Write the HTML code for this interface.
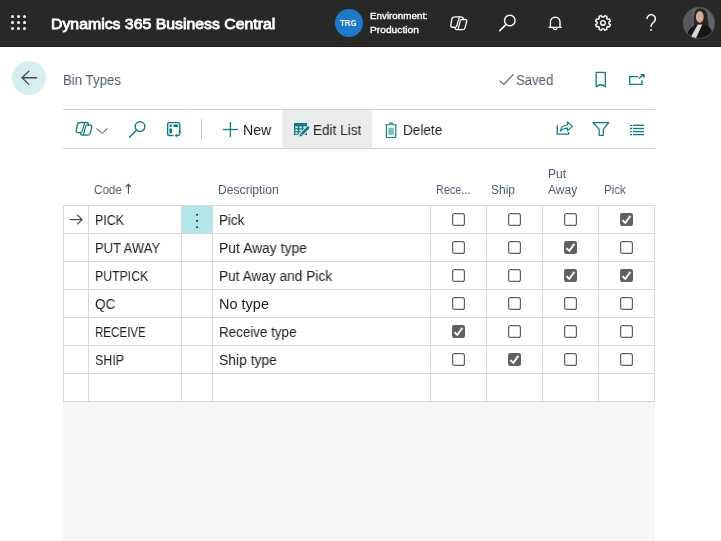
<!DOCTYPE html>
<html><head><meta charset="utf-8">
<style>
*{box-sizing:border-box;margin:0;padding:0}
html,body{width:721px;height:541px;overflow:hidden;background:#fff;font-family:"Liberation Sans",sans-serif;position:relative}
.abs{position:absolute}
.t{position:absolute;white-space:nowrap;line-height:1;font-family:"Liberation Sans",sans-serif;will-change:transform}
.gh{position:absolute;height:1px;background:#d5d9da}
.gv{position:absolute;width:1px;background:#d5d9da}
.hl{position:absolute;height:1px;background:#cfd2d6}
.dot{position:absolute;width:3px;height:3px;border-radius:50%;background:#fff}
</style></head><body>
<div class="abs" style="left:0;top:0;width:721px;height:46px;background:#282828"></div>
<div class="abs" style="left:0;top:46px;width:721px;height:1px;background:#1f1f1f"></div>
<div class="dot" style="left:11px;top:15px"></div><div class="dot" style="left:17px;top:15px"></div><div class="dot" style="left:23px;top:15px"></div>
<div class="dot" style="left:11px;top:21px"></div><div class="dot" style="left:17px;top:21px"></div><div class="dot" style="left:23px;top:21px"></div>
<div class="dot" style="left:11px;top:27px"></div><div class="dot" style="left:17px;top:27px"></div><div class="dot" style="left:23px;top:27px"></div>
<div class="abs" style="left:335px;top:9px;width:28px;height:28px;border-radius:50%;background:#1f78c8"></div>
<div class="abs" style="left:12px;top:61px;width:34px;height:34px;border-radius:50%;background:#d7eef1"></div>
<div class="hl" style="left:63px;top:109px;width:592px"></div>
<div class="hl" style="left:63px;top:148px;width:592px"></div>
<div class="abs" style="left:282px;top:110px;width:90px;height:37.5px;background:#eaebed;border-radius:3px"></div>
<div class="abs" style="left:63px;top:402px;width:592px;height:139px;background:#f5f6f7"></div>
<div class="abs" style="left:181px;top:205px;width:31px;height:28px;background:#b3e6ea"></div>
<div class="gh" style="left:63px;top:205px;width:592px"></div>
<div class="gh" style="left:63px;top:233px;width:592px"></div>
<div class="gh" style="left:63px;top:261px;width:592px"></div>
<div class="gh" style="left:63px;top:289px;width:592px"></div>
<div class="gh" style="left:63px;top:317px;width:592px"></div>
<div class="gh" style="left:63px;top:345px;width:592px"></div>
<div class="gh" style="left:63px;top:373px;width:592px"></div>
<div class="gh" style="left:63px;top:401px;width:592px"></div>
<div class="gv" style="left:63px;top:205px;height:197px"></div>
<div class="gv" style="left:88px;top:205px;height:197px"></div>
<div class="gv" style="left:181px;top:205px;height:197px"></div>
<div class="gv" style="left:212px;top:205px;height:197px"></div>
<div class="gv" style="left:430px;top:205px;height:197px"></div>
<div class="gv" style="left:486px;top:205px;height:197px"></div>
<div class="gv" style="left:542px;top:205px;height:197px"></div>
<div class="gv" style="left:598px;top:205px;height:197px"></div>
<div class="gv" style="left:654px;top:205px;height:197px"></div>
<svg class="abs" style="left:452.0px;top:212.5px" width="13" height="13" viewBox="0 0 13 13"><rect x="0.6" y="0.6" width="11.8" height="11.8" rx="2" fill="none" stroke="#616161" stroke-width="1.2"/></svg>
<svg class="abs" style="left:508.0px;top:212.5px" width="13" height="13" viewBox="0 0 13 13"><rect x="0.6" y="0.6" width="11.8" height="11.8" rx="2" fill="none" stroke="#616161" stroke-width="1.2"/></svg>
<svg class="abs" style="left:564.0px;top:212.5px" width="13" height="13" viewBox="0 0 13 13"><rect x="0.6" y="0.6" width="11.8" height="11.8" rx="2" fill="none" stroke="#616161" stroke-width="1.2"/></svg>
<svg class="abs" style="left:620.0px;top:212.5px" width="13" height="13" viewBox="0 0 13 13"><rect x="0" y="0" width="13" height="13" rx="2.2" fill="#616161"/><path d="M2.4,7.1 L5.3,9.9 L10.4,2.9" stroke="#fff" stroke-width="1.9" fill="none"/></svg>
<svg class="abs" style="left:452.0px;top:240.5px" width="13" height="13" viewBox="0 0 13 13"><rect x="0.6" y="0.6" width="11.8" height="11.8" rx="2" fill="none" stroke="#616161" stroke-width="1.2"/></svg>
<svg class="abs" style="left:508.0px;top:240.5px" width="13" height="13" viewBox="0 0 13 13"><rect x="0.6" y="0.6" width="11.8" height="11.8" rx="2" fill="none" stroke="#616161" stroke-width="1.2"/></svg>
<svg class="abs" style="left:564.0px;top:240.5px" width="13" height="13" viewBox="0 0 13 13"><rect x="0" y="0" width="13" height="13" rx="2.2" fill="#616161"/><path d="M2.4,7.1 L5.3,9.9 L10.4,2.9" stroke="#fff" stroke-width="1.9" fill="none"/></svg>
<svg class="abs" style="left:620.0px;top:240.5px" width="13" height="13" viewBox="0 0 13 13"><rect x="0.6" y="0.6" width="11.8" height="11.8" rx="2" fill="none" stroke="#616161" stroke-width="1.2"/></svg>
<svg class="abs" style="left:452.0px;top:268.5px" width="13" height="13" viewBox="0 0 13 13"><rect x="0.6" y="0.6" width="11.8" height="11.8" rx="2" fill="none" stroke="#616161" stroke-width="1.2"/></svg>
<svg class="abs" style="left:508.0px;top:268.5px" width="13" height="13" viewBox="0 0 13 13"><rect x="0.6" y="0.6" width="11.8" height="11.8" rx="2" fill="none" stroke="#616161" stroke-width="1.2"/></svg>
<svg class="abs" style="left:564.0px;top:268.5px" width="13" height="13" viewBox="0 0 13 13"><rect x="0" y="0" width="13" height="13" rx="2.2" fill="#616161"/><path d="M2.4,7.1 L5.3,9.9 L10.4,2.9" stroke="#fff" stroke-width="1.9" fill="none"/></svg>
<svg class="abs" style="left:620.0px;top:268.5px" width="13" height="13" viewBox="0 0 13 13"><rect x="0" y="0" width="13" height="13" rx="2.2" fill="#616161"/><path d="M2.4,7.1 L5.3,9.9 L10.4,2.9" stroke="#fff" stroke-width="1.9" fill="none"/></svg>
<svg class="abs" style="left:452.0px;top:296.5px" width="13" height="13" viewBox="0 0 13 13"><rect x="0.6" y="0.6" width="11.8" height="11.8" rx="2" fill="none" stroke="#616161" stroke-width="1.2"/></svg>
<svg class="abs" style="left:508.0px;top:296.5px" width="13" height="13" viewBox="0 0 13 13"><rect x="0.6" y="0.6" width="11.8" height="11.8" rx="2" fill="none" stroke="#616161" stroke-width="1.2"/></svg>
<svg class="abs" style="left:564.0px;top:296.5px" width="13" height="13" viewBox="0 0 13 13"><rect x="0.6" y="0.6" width="11.8" height="11.8" rx="2" fill="none" stroke="#616161" stroke-width="1.2"/></svg>
<svg class="abs" style="left:620.0px;top:296.5px" width="13" height="13" viewBox="0 0 13 13"><rect x="0.6" y="0.6" width="11.8" height="11.8" rx="2" fill="none" stroke="#616161" stroke-width="1.2"/></svg>
<svg class="abs" style="left:452.0px;top:324.5px" width="13" height="13" viewBox="0 0 13 13"><rect x="0" y="0" width="13" height="13" rx="2.2" fill="#616161"/><path d="M2.4,7.1 L5.3,9.9 L10.4,2.9" stroke="#fff" stroke-width="1.9" fill="none"/></svg>
<svg class="abs" style="left:508.0px;top:324.5px" width="13" height="13" viewBox="0 0 13 13"><rect x="0.6" y="0.6" width="11.8" height="11.8" rx="2" fill="none" stroke="#616161" stroke-width="1.2"/></svg>
<svg class="abs" style="left:564.0px;top:324.5px" width="13" height="13" viewBox="0 0 13 13"><rect x="0.6" y="0.6" width="11.8" height="11.8" rx="2" fill="none" stroke="#616161" stroke-width="1.2"/></svg>
<svg class="abs" style="left:620.0px;top:324.5px" width="13" height="13" viewBox="0 0 13 13"><rect x="0.6" y="0.6" width="11.8" height="11.8" rx="2" fill="none" stroke="#616161" stroke-width="1.2"/></svg>
<svg class="abs" style="left:452.0px;top:352.5px" width="13" height="13" viewBox="0 0 13 13"><rect x="0.6" y="0.6" width="11.8" height="11.8" rx="2" fill="none" stroke="#616161" stroke-width="1.2"/></svg>
<svg class="abs" style="left:508.0px;top:352.5px" width="13" height="13" viewBox="0 0 13 13"><rect x="0" y="0" width="13" height="13" rx="2.2" fill="#616161"/><path d="M2.4,7.1 L5.3,9.9 L10.4,2.9" stroke="#fff" stroke-width="1.9" fill="none"/></svg>
<svg class="abs" style="left:564.0px;top:352.5px" width="13" height="13" viewBox="0 0 13 13"><rect x="0.6" y="0.6" width="11.8" height="11.8" rx="2" fill="none" stroke="#616161" stroke-width="1.2"/></svg>
<svg class="abs" style="left:620.0px;top:352.5px" width="13" height="13" viewBox="0 0 13 13"><rect x="0.6" y="0.6" width="11.8" height="11.8" rx="2" fill="none" stroke="#616161" stroke-width="1.2"/></svg>
<div class="t" style="left:50.83px;top:16.53px;font-size:14.5px;font-weight:400;color:#ffffff;transform:scaleX(1.0914);transform-origin:0 0;-webkit-text-stroke:0.8px #fff;">Dynamics 365 Business Central</div>
<div class="t" style="left:369.93px;top:11.06px;font-size:9.5px;font-weight:400;color:#ffffff;transform:scaleX(1.0334);transform-origin:0 0;-webkit-text-stroke:0.35px #fff;">Environment:</div>
<div class="t" style="left:369.93px;top:25.36px;font-size:9.5px;font-weight:400;color:#ffffff;transform:scaleX(1.0756);transform-origin:0 0;-webkit-text-stroke:0.35px #fff;">Production</div>
<div class="t" style="left:340.47px;top:19.05px;font-size:8.8px;font-weight:700;color:#ffffff;transform:scaleX(0.8985);transform-origin:0 0;">TRG</div>
<div class="t" style="left:63.06px;top:73.15px;font-size:14px;font-weight:400;color:#505c6d;transform:scaleX(0.9449);transform-origin:0 0;">Bin Types</div>
<div class="t" style="left:515.76px;top:72.95px;font-size:14px;font-weight:400;color:#505c6d;transform:scaleX(0.9385);transform-origin:0 0;">Saved</div>
<div class="t" style="left:242.76px;top:123.15px;font-size:14px;font-weight:400;color:#242424;transform:scaleX(1.0087);transform-origin:0 0;">New</div>
<div class="t" style="left:312.86px;top:122.75px;font-size:14px;font-weight:400;color:#242424;transform:scaleX(0.9688);transform-origin:0 0;">Edit List</div>
<div class="t" style="left:403.06px;top:123.15px;font-size:14px;font-weight:400;color:#242424;transform:scaleX(0.9701);transform-origin:0 0;">Delete</div>
<div class="t" style="left:93.58px;top:183.54px;font-size:12px;font-weight:400;color:#505c6d;transform:scaleX(0.9719);transform-origin:0 0;">Code</div>
<div class="t" style="left:217.88px;top:183.84px;font-size:12px;font-weight:400;color:#505c6d;transform:scaleX(1.0108);transform-origin:0 0;">Description</div>
<div class="t" style="left:435.58px;top:183.84px;font-size:12px;font-weight:400;color:#505c6d;transform:scaleX(0.9044);transform-origin:0 0;">Rece...</div>
<div class="t" style="left:491.28px;top:183.84px;font-size:12px;font-weight:400;color:#505c6d;">Ship</div>
<div class="t" style="left:547.58px;top:167.64px;font-size:12px;font-weight:400;color:#505c6d;">Put</div>
<div class="t" style="left:547.58px;top:183.84px;font-size:12px;font-weight:400;color:#505c6d;transform:scaleX(0.9911);transform-origin:0 0;">Away</div>
<div class="t" style="left:603.88px;top:183.84px;font-size:12px;font-weight:400;color:#505c6d;transform:scaleX(0.9563);transform-origin:0 0;">Pick</div>
<div class="t" style="left:94.66px;top:213.15px;font-size:14px;font-weight:400;color:#212121;transform:scaleX(0.8890);transform-origin:0 0;">PICK</div>
<div class="t" style="left:219.26px;top:213.15px;font-size:14px;font-weight:400;color:#212121;transform:scaleX(0.9549);transform-origin:0 0;">Pick</div>
<div class="t" style="left:94.66px;top:241.15px;font-size:14px;font-weight:400;color:#212121;transform:scaleX(0.9292);transform-origin:0 0;">PUT AWAY</div>
<div class="t" style="left:219.26px;top:241.15px;font-size:14px;font-weight:400;color:#212121;transform:scaleX(0.9931);transform-origin:0 0;">Put Away type</div>
<div class="t" style="left:94.66px;top:269.15px;font-size:14px;font-weight:400;color:#212121;transform:scaleX(0.8776);transform-origin:0 0;">PUTPICK</div>
<div class="t" style="left:219.26px;top:269.15px;font-size:14px;font-weight:400;color:#212121;transform:scaleX(0.9772);transform-origin:0 0;">Put Away and Pick</div>
<div class="t" style="left:94.66px;top:297.15px;font-size:14px;font-weight:400;color:#212121;transform:scaleX(0.9648);transform-origin:0 0;">QC</div>
<div class="t" style="left:219.26px;top:297.15px;font-size:14px;font-weight:400;color:#212121;transform:scaleX(1.0354);transform-origin:0 0;">No type</div>
<div class="t" style="left:94.66px;top:325.15px;font-size:14px;font-weight:400;color:#212121;transform:scaleX(0.8258);transform-origin:0 0;">RECEIVE</div>
<div class="t" style="left:219.26px;top:325.15px;font-size:14px;font-weight:400;color:#212121;transform:scaleX(0.9570);transform-origin:0 0;">Receive type</div>
<div class="t" style="left:94.66px;top:353.15px;font-size:14px;font-weight:400;color:#212121;transform:scaleX(0.8890);transform-origin:0 0;">SHIP</div>
<div class="t" style="left:219.26px;top:353.15px;font-size:14px;font-weight:400;color:#212121;transform:scaleX(0.9912);transform-origin:0 0;">Ship type</div>
<svg class="abs" style="left:0;top:0;z-index:5" width="721" height="541" viewBox="0 0 721 541">

<!-- top bar icons -->
<g stroke="#fff" fill="none">
  <g transform="translate(450.5,16.3) scale(1.02) translate(-76,-122)">
  <path d="M80.6,122.5 L86.4,122.5 Q88.3,122.5 88.7,125.1 L90.1,125.1 Q92.2,125.1 91.8,127.2 L90.3,133.1 Q89.8,135.1 87.9,135.1 L82.3,135.1 Q80.3,135.1 80.6,133.2 L80.7,132.7 L78,132.7 Q76,132.7 76.3,130.7 L77.4,124.3 Q77.8,122.5 80.6,122.5 Z" fill="none" stroke-width="1.3" stroke-linejoin="round"/>
  <path d="M84.8,122.7 L81.7,132.6 M85.9,125.3 L83.4,134.9 M85.9,125.15 L88.8,125.15" fill="none" stroke-width="1.2"/>
</g>
  <circle cx="509.8" cy="20.6" r="5.3" stroke-width="1.4"/>
  <line x1="505.9" y1="24.6" x2="499.8" y2="30.6" stroke-width="1.5" stroke-linecap="round"/>
  <path d="M550.4,27.3 L550.4,22 A4.8,4.8 0 0 1 560,22 L560,27.3" stroke-width="1.4"/>
  <line x1="548.6" y1="27.4" x2="561.8" y2="27.4" stroke-width="1.3"/>
  <path d="M553.3,28.2 A2,2 0 0 0 557.1,28.2" stroke-width="1.3"/>
  <path d="M647,19 A4.2,4.2 0 1 1 653.5,22.3 Q651,24 651,27" stroke-width="1.5"/>
</g>
<circle cx="651" cy="30" r="0.95" fill="#fff"/>
<!-- gear -->
<g transform="translate(603,22.9)" stroke="#fff" fill="none" stroke-width="1.35">
  <path d="M5.90,0.00 L5.85,0.77 L7.39,1.77 L6.48,3.97 L4.68,3.59 L4.17,4.17 L3.59,4.68 L3.97,6.48 L1.77,7.39 L0.77,5.85 L0.00,5.90 L-0.77,5.85 L-1.77,7.39 L-3.97,6.48 L-3.59,4.68 L-4.17,4.17 L-4.68,3.59 L-6.48,3.97 L-7.39,1.77 L-5.85,0.77 L-5.90,0.00 L-5.85,-0.77 L-7.39,-1.77 L-6.48,-3.97 L-4.68,-3.59 L-4.17,-4.17 L-3.59,-4.68 L-3.97,-6.48 L-1.77,-7.39 L-0.77,-5.85 L-0.00,-5.90 L0.77,-5.85 L1.77,-7.39 L3.97,-6.48 L3.59,-4.68 L4.17,-4.17 L4.68,-3.59 L6.48,-3.97 L7.39,-1.77 L5.85,-0.77 Z" stroke-linejoin="round"/>
  <circle r="2.3"/>
</g>
<!-- avatar -->
<defs><filter id="avb" x="-10%" y="-10%" width="120%" height="120%"><feGaussianBlur stdDeviation="0.45"/></filter><clipPath id="av"><circle cx="699" cy="23" r="16"/></clipPath></defs>
<g clip-path="url(#av)">
  <rect x="683" y="7" width="32" height="32" fill="#5f6269"/>
  <g filter="url(#avb)">
  <rect x="683" y="7" width="9" height="32" fill="#505359" opacity="0.6"/>
  <path d="M694,28 Q693,13 696,10 Q699.5,7.6 703.8,9.3 Q707.8,12 707.6,18 L709,28 Z" fill="#2d231e"/>
  <ellipse cx="699.8" cy="16.9" rx="3.9" ry="5.8" fill="#d2aa9a"/>
  <path d="M686,40 Q687,29 694,25.8 L698,24.2 L703.5,24.2 Q710.5,26 713,33 L713,40 Z" fill="#161618"/>
  <path d="M697.8,24.6 L702.3,24.6 L695.8,38.5 L690.5,37.5 Z" fill="#d7d8db"/>
  </g>
</g>
<circle cx="699" cy="23" r="15.6" fill="none" stroke="#555" stroke-width="0.8"/>

<!-- back arrow -->
<g stroke="#474747" fill="none" stroke-width="1.3" stroke-linecap="round">
  <path d="M28.8,71.2 L22,77.7 L28.8,84.4"/>
  <line x1="22.5" y1="77.7" x2="36.5" y2="77.7" stroke-width="1.6"/>
</g>
<!-- saved check -->
<path d="M499.6,80.6 L503.8,84.4 L513.4,74.4" stroke="#56606c" stroke-width="1.2" fill="none"/>
<!-- bookmark -->
<path d="M596.2,72.4 L605.3,72.4 L605.3,86.9 Q600.75,82.6 596.2,86.9 Z" stroke="#0f7b83" stroke-width="1.3" fill="none" stroke-linejoin="round"/>
<!-- popout -->
<g stroke="#0f7b83" stroke-width="1.3" fill="none">
  <path d="M638.3,76.6 L629.8,76.6 L629.8,84.3 L642,84.3 L642,80.2"/>
  <path d="M639,78.6 L642.6,75.6"/>
</g>
<path d="M640.2,73.9 L644.6,73.9 L644.6,78.2 Z" fill="#0f7b83"/>

<!-- toolbar icons -->
<g stroke="#0f7b83" fill="none">
  
  <path d="M80.6,122.5 L86.4,122.5 Q88.3,122.5 88.7,125.1 L90.1,125.1 Q92.2,125.1 91.8,127.2 L90.3,133.1 Q89.8,135.1 87.9,135.1 L82.3,135.1 Q80.3,135.1 80.6,133.2 L80.7,132.7 L78,132.7 Q76,132.7 76.3,130.7 L77.4,124.3 Q77.8,122.5 80.6,122.5 Z" fill="none" stroke-width="1.3" stroke-linejoin="round"/>
  <path d="M84.8,122.7 L81.7,132.6 M85.9,125.3 L83.4,134.9 M85.9,125.15 L88.8,125.15" fill="none" stroke-width="1.2"/>

</g>
<path d="M96.5,128.5 L102,133.3 L107.5,128.5" stroke="#7a7a7a" stroke-width="1.1" fill="none"/>
<g stroke="#0f7b83" fill="none">
  <circle cx="140" cy="126.6" r="4.9" stroke-width="1.35"/>
  <line x1="136.4" y1="130.3" x2="129.5" y2="137.3" stroke-width="1.4" stroke-linecap="round"/>
  <path d="M179.8,131.8 L179.8,124.6 Q179.8,122.6 177.8,122.6 L169.6,122.6 Q167.6,122.6 167.6,124.6 L167.6,133.5 Q167.6,135.5 169.6,135.5 L173.6,135.5" stroke-width="1.35"/>
  <path d="M179.8,131.1 L179.8,133.5 Q179.8,135.5 177.8,135.5 L175.6,135.5" stroke-width="1.2"/>
  <path d="M178.5,132.3 L179.8,131 L181.1,132.3 M176.8,134.2 L175.5,135.5 L176.8,136.8" stroke-width="1.1"/>
</g>
<g fill="#0f7b83">
  <rect x="169.4" y="124.4" width="2.5" height="2.5" rx="1"/>
  <rect x="173.3" y="124.4" width="5" height="2.5" rx="1"/>
  <rect x="169.4" y="128.3" width="2.5" height="5.2" rx="1"/>
</g>
<line x1="201.5" y1="118.3" x2="201.5" y2="140.5" stroke="#c8cacc" stroke-width="1"/>
<!-- plus -->
<g stroke="#0f7b83" stroke-width="1.3">
  <line x1="230.4" y1="122" x2="230.4" y2="137"/>
  <line x1="222.9" y1="129.5" x2="238" y2="129.5"/>
</g>
<!-- edit list icon -->
<g>
  <rect x="294" y="123" width="13" height="12" fill="#0f7b83"/>
  <g fill="#ebebed">
    <rect x="295.3" y="126.4" width="2.4" height="1.8"/><rect x="299.3" y="126.4" width="2.4" height="1.8"/><rect x="303.3" y="126.4" width="2.4" height="1.8"/>
    <rect x="295.3" y="129.4" width="2.4" height="1.8"/><rect x="299.3" y="129.4" width="2.4" height="1.8"/><rect x="303.3" y="129.4" width="2.4" height="1.8"/>
    <rect x="295.3" y="132.4" width="2.4" height="1.8"/><rect x="299.3" y="132.4" width="2.4" height="1.8"/><rect x="303.3" y="132.4" width="2.4" height="1.8"/>
  </g>
  <line x1="300.4" y1="135.4" x2="307.7" y2="128.1" stroke="#eaebed" stroke-width="4.8" stroke-linecap="round"/>
  <line x1="301.4" y1="134.4" x2="306.3" y2="129.5" stroke="#0f7b83" stroke-width="2.7"/>
  <path d="M299.4,136.6 L300.1,133.5 L302.5,135.9 Z" fill="#0f7b83"/>
  <line x1="307" y1="128.8" x2="308.1" y2="127.7" stroke="#0f7b83" stroke-width="2.7" stroke-linecap="round"/>
  </g>
<!-- delete icon -->
<g stroke="#0f7b83" fill="none" stroke-width="1.15">
  <line x1="385.3" y1="124.7" x2="396.7" y2="124.7" stroke="#3f969c"/>
  <path d="M386.4,124.7 L386.4,136.4 Q386.4,137.5 387.5,137.5 L394.7,137.5 Q395.8,137.5 395.8,136.4 L395.8,124.7"/>
</g>
<path d="M388.6,124.4 Q389.2,122.1 391.1,122.1 Q393,122.1 393.6,124.4 Z" fill="#2a8a91"/>
<line x1="391.1" y1="122.4" x2="391.1" y2="124.3" stroke="#9fd0d3" stroke-width="0.8"/>
<rect x="388.3" y="127.9" width="5.5" height="7" fill="#7fbcc1"/>
<!-- share -->
<g stroke="#0f7b83" fill="none" stroke-width="1.3">
  <path d="M557.3,125.2 L557.3,134.2 L568.7,134.2 L568.7,132.3"/>
  <path d="M560.4,131.2 Q561.2,125.2 567.4,125 L567.4,121.9 L572.4,126.4 L567.4,130.9 L567.4,128.1 Q562.8,128.2 560.4,131.2 Z" stroke-width="1.15" stroke-linejoin="round"/>
</g>
<!-- filter -->
<path d="M593.1,122.5 L608.8,122.5 L603.3,129.3 L603.3,135.3 L599.2,135.3 L599.2,129.3 Z" stroke="#0f7b83" stroke-width="1.25" fill="none" stroke-linejoin="round"/>
<!-- list -->
<g stroke="#0f7b83" stroke-width="1.35">
  <line x1="630" y1="125.3" x2="632" y2="125.3"/><line x1="632.9" y1="125.3" x2="644" y2="125.3"/>
  <line x1="630" y1="128.5" x2="632" y2="128.5"/><line x1="632.9" y1="128.5" x2="644" y2="128.5"/>
  <line x1="630" y1="131.6" x2="632" y2="131.6"/><line x1="632.9" y1="131.6" x2="644" y2="131.6"/>
  <line x1="630" y1="134.6" x2="632" y2="134.6"/><line x1="632.9" y1="134.6" x2="644" y2="134.6"/>
</g>
<!-- row arrow -->
<g stroke="#3a3a3a" stroke-width="1.1" fill="none">
  <line x1="69.8" y1="219.6" x2="82" y2="219.6"/>
  <path d="M77.2,214.8 L82,219.6 L77.2,224.4"/>
</g>
<!-- sort arrow -->
<g stroke="#4a4a4a" stroke-width="1.1" fill="none">
  <line x1="128.4" y1="184.3" x2="128.4" y2="193.8"/>
  <path d="M125.8,186.9 L128.4,184.3 L131,186.9"/>
</g>
<!-- dots -->
<g fill="#333"><circle cx="197.1" cy="214.7" r="1.05"/><circle cx="197.1" cy="220.9" r="1.05"/><circle cx="197.1" cy="227.2" r="1.05"/></g>
</svg>

</body></html>
